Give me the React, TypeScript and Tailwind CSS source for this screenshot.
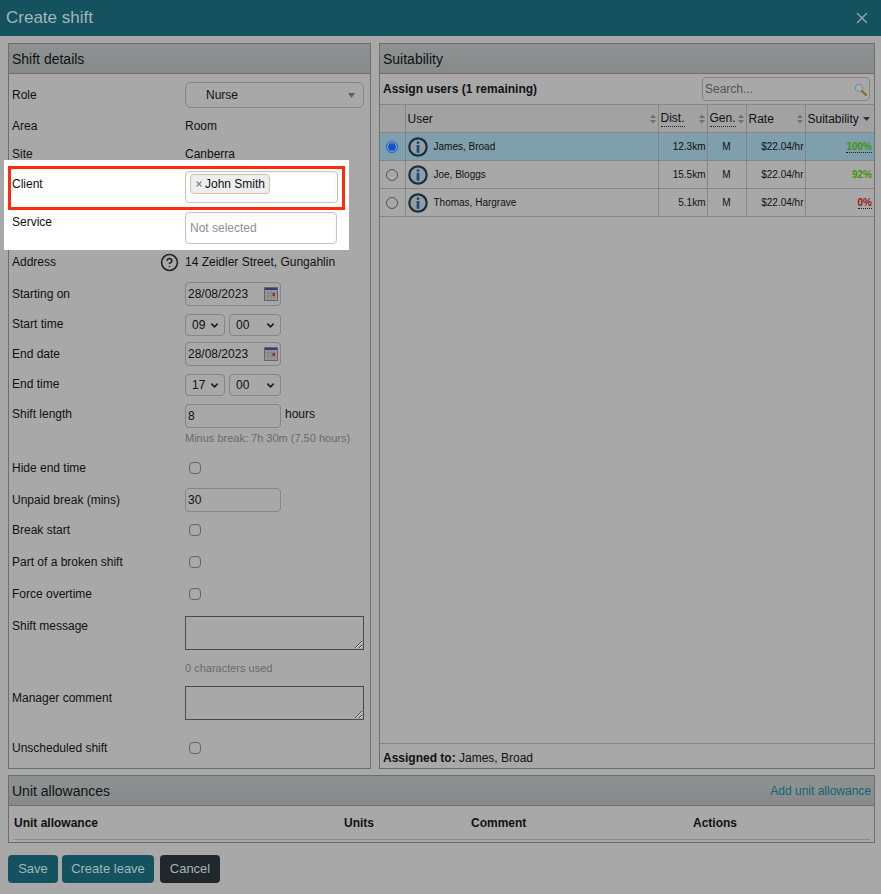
import { ChevronDown, CircleHelp, X } from 'lucide-react'

const USERS = [
  { name: 'James, Broad', dist: '12.3km', pct: '100%', color: 'text-[#3f9408]', dotted: true, selected: true },
  { name: 'Joe, Bloggs', dist: '15.5km', pct: '92%', color: 'text-[#3f9408]', dotted: false, selected: false },
  { name: 'Thomas, Hargrave', dist: '5.1km', pct: '0%', color: 'text-[#9c1414]', dotted: true, selected: false },
]

function CalendarIcon() {
  return (
    <svg width="14" height="14" viewBox="0 0 14 14" className="absolute right-0.5 top-1">
      <rect x="0.5" y="0.5" width="13" height="13" fill="#9a9a9a" stroke="#666" />
      <rect x="1" y="1" width="12" height="2" fill="#2f3f80" />
      <path d="M1 6h12M1 9h12M4 3v10M7 3v10M10 3v10" stroke="#7c7c7c" strokeWidth="0.7" />
      <rect x="8.5" y="6" width="2.5" height="3" fill="#8c3030" />
    </svg>
  )
}

function InfoIcon() {
  return (
    <svg width="20" height="20" viewBox="0 0 20 20" className="shrink-0">
      <circle cx="10" cy="10" r="8.7" fill="#929ea4" stroke="#1a2f3d" strokeWidth="2.2" />
      <circle cx="10" cy="5.7" r="1.4" fill="#1f4a80" />
      <rect x="8.6" y="8" width="2.8" height="7.8" rx="0.4" fill="#1f4a80" />
    </svg>
  )
}

function SortArrows() {
  return (
    <svg width="6" height="10" viewBox="0 0 6 10" className="shrink-0">
      <path d="M3 0.5 6 4H0zM3 9.5 0 6h6z" fill="#6f6f6f" />
    </svg>
  )
}

function PanelHeader({ children }: { children: React.ReactNode }) {
  return (
    <div className="flex h-7.5 items-center justify-between border-b border-[#6e6e6e] bg-gradient-to-b from-[#8f9292] to-[#868a8a] px-[3px] text-sm text-[#111]">
      {children}
    </div>
  )
}

function Label({ children }: { children: React.ReactNode }) {
  return <div className="w-[173px] shrink-0 leading-5">{children}</div>
}

function DateInput({ value }: { value: string }) {
  return (
    <div className="relative flex h-6 w-24 items-center rounded-sm border border-[#858585] pl-0.5">
      {value}
      <CalendarIcon />
    </div>
  )
}

function TimeSelect({ value, width }: { value: string; width: string }) {
  return (
    <div className={`flex h-5.5 items-center justify-between rounded-sm border border-[#858585] pl-1.5 pr-1 ${width}`}>
      {value}
      <ChevronDown size={11} strokeWidth={3.5} className="text-[#222]" />
    </div>
  )
}

function Check() {
  return <input type="checkbox" className="ml-1 mt-1 h-3 w-3 appearance-none rounded-sm border border-[#666]" />
}

function Textarea() {
  return <textarea readOnly className="h-8.5 flex-1 border border-[#4a4a4a] bg-transparent" />
}

function HeaderCell({ label, dotted, width, sorted }: { label: string; dotted?: boolean; width?: string; sorted?: boolean }) {
  return (
    <th className={`border-l border-[#858585] bg-[#a2a2a2] px-0.5 font-normal ${width ?? ''}`}>
      <div className="flex items-center justify-between">
        <span className={dotted ? 'border-b border-dotted border-[#222] leading-4' : 'leading-4'}>{label}</span>
        {sorted ? (
          <svg width="7" height="4" viewBox="0 0 7 4" className="mr-0.5 shrink-0">
            <path d="M0 0h7L3.5 4z" fill="#333" />
          </svg>
        ) : (
          <SortArrows />
        )}
      </div>
    </th>
  )
}

export default function App() {
  return (
    <div className="min-h-screen bg-[#a8a8a8] font-['Liberation_Sans',Arial,sans-serif] text-xs text-[#111]">
      <div className="flex h-9 items-center justify-between bg-[#14525f] pl-1.5 pr-2.5 text-[17px] text-[#a3b6ba]">
        Create shift
        <X size={18} className="text-[#8aa3a9]" />
      </div>

      <div className="flex gap-2 pl-2 pr-1.5 pt-[7px]">
        {/* Shift details */}
        <div className="w-[363px] shrink-0 border border-[#6e6e6e]">
          <PanelHeader>Shift details</PanelHeader>
          <div className="pb-2.5 pl-[3px] pr-1.5 pt-2">
            <div className="flex items-center">
              <Label>Role</Label>
              <div className="flex h-6.5 flex-1 items-center justify-between rounded-md border border-[#858585] pl-5 pr-2">
                Nurse
                <svg width="7" height="5" viewBox="0 0 7 5">
                  <path d="M0 0h7L3.5 5z" fill="#5f5f5f" />
                </svg>
              </div>
            </div>
            <div className="mt-2 flex">
              <Label>Area</Label>
              <span className="leading-5">Room</span>
            </div>
            <div className="mt-2 flex h-4">
              <Label>Site</Label>
              <span className="leading-5">Canberra</span>
            </div>

            {/* highlighted fields */}
            <div className="-ml-2 w-[345px] bg-white pb-1.5 pl-1 pr-1 pt-1.5 text-[#111]">
              <div className="flex border-3 border-[#ff2a0a] pb-1 pl-px pr-1 pt-0.5">
                <div className="mt-0.5 w-[173px] shrink-0 pt-px leading-5">Client</div>
                <div className="flex h-8 flex-1 rounded-sm border border-[#c4c4c4] px-1 pt-0.5 shadow-inner">
                  <span className="flex h-5 items-center gap-0.5 rounded-sm border border-[#c9c9a8] bg-[#eeeeee] px-1">
                    <X size={8} strokeWidth={4} className="text-[#8a8a8a]" />
                    John Smith
                  </span>
                </div>
              </div>
              <div className="mt-0.5 flex pl-1 pr-2">
                <div className="w-[173px] shrink-0 leading-5">Service</div>
                <div className="flex h-8 flex-1 items-center rounded-sm border border-[#c4c4c4] px-1 text-[#8f8f8f] shadow-inner">
                  Not selected
                </div>
              </div>
            </div>

            <div className="mt-0.5 flex">
              <div className="flex w-[173px] shrink-0 items-center justify-between pr-1.5 leading-5">
                Address
                <CircleHelp size={19} className="text-[#222]" />
              </div>
              <span className="leading-5">14 Zeidler Street, Gungahlin</span>
            </div>

            <div className="mt-2.5 flex items-center">
              <Label>Starting on</Label>
              <DateInput value="28/08/2023" />
            </div>
            <div className="mt-2 flex">
              <Label>Start time</Label>
              <div className="flex gap-1">
                <TimeSelect value="09" width="w-10" />
                <TimeSelect value="00" width="w-13" />
              </div>
            </div>
            <div className="mt-1.5 flex items-center">
              <Label>End date</Label>
              <DateInput value="28/08/2023" />
            </div>
            <div className="mt-2 flex">
              <Label>End time</Label>
              <div className="flex gap-1">
                <TimeSelect value="17" width="w-10" />
                <TimeSelect value="00" width="w-13" />
              </div>
            </div>
            <div className="mt-2 flex">
              <Label>Shift length</Label>
              <div className="flex h-6 w-24 items-center rounded-sm border border-[#858585] pl-0.5">8</div>
              <span className="ml-1 leading-5">hours</span>
            </div>
            <div className="ml-[173px] mt-0.5 text-[11px] leading-4 text-[#6a6a6a]">Minus break: 7h 30m (7.50 hours)</div>

            <div className="mt-3 flex">
              <Label>Hide end time</Label>
              <Check />
            </div>
            <div className="mt-2.5 flex items-center">
              <Label>Unpaid break (mins)</Label>
              <div className="flex h-6 w-24 items-center rounded-sm border border-[#858585] pl-0.5">30</div>
            </div>
            <div className="mt-2 flex">
              <Label>Break start</Label>
              <Check />
            </div>
            <div className="mt-3 flex">
              <Label>Part of a broken shift</Label>
              <Check />
            </div>
            <div className="mt-3 flex">
              <Label>Force overtime</Label>
              <Check />
            </div>
            <div className="mt-3 flex">
              <Label>Shift message</Label>
              <Textarea />
            </div>
            <div className="ml-[173px] mt-2.5 text-[11px] leading-4 text-[#6a6a6a]">0 characters used</div>
            <div className="mt-2.5 flex">
              <div className="mt-0.5 w-[173px] shrink-0 leading-5">Manager comment</div>
              <Textarea />
            </div>
            <div className="mt-4.5 flex">
              <Label>Unscheduled shift</Label>
              <Check />
            </div>
          </div>
        </div>

        {/* Suitability */}
        <div className="flex flex-1 flex-col border border-[#6e6e6e]">
          <PanelHeader>Suitability</PanelHeader>
          <div className="flex h-7.5 items-center justify-between pl-[3px] pr-1">
            <span className="font-bold">Assign users (1 remaining)</span>
            <div className="flex h-6 w-42 items-center justify-between rounded-sm border border-[#858585] pl-0.5 pr-0.5 text-[#555]">
              Search...
              <svg width="13" height="13" viewBox="0 0 13 13">
                <circle cx="5" cy="5" r="3.8" fill="#9fb0b6" stroke="#7c8c90" />
                <path d="M8 8l4 4" stroke="#8d6420" strokeWidth="2" strokeLinecap="round" />
              </svg>
            </div>
          </div>
          <div className="flex-1">
            <table className="w-full table-fixed border-collapse border-y border-[#858585]">
              <thead>
                <tr className="h-7 text-left">
                  <th className="w-[25px] bg-[#a2a2a2]" />
                  <HeaderCell label="User" />
                  <HeaderCell label="Dist." dotted width="w-[49px]" />
                  <HeaderCell label="Gen." dotted width="w-[39px]" />
                  <HeaderCell label="Rate" width="w-[59px]" />
                  <HeaderCell label="Suitability" sorted width="w-[69px]" />
                </tr>
              </thead>
              <tbody className="text-[10px]">
                {USERS.map(u => (
                  <tr key={u.name} className={`h-7 border-t border-[#858585] ${u.selected ? 'bg-[#7f9fac]' : ''}`}>
                    <td className="text-center">
                      <input
                        type="radio"
                        readOnly
                        checked={u.selected}
                        className="mt-1 h-3 w-3 appearance-none rounded-full border border-[#555] checked:border-[#2a66d0] checked:bg-[#1655c4] checked:shadow-[inset_0_0_0_1px_#a9b8c4]"
                      />
                    </td>
                    <td className="border-l border-[#858585] pl-0.5">
                      <div className="flex items-center gap-1.5">
                        <InfoIcon />
                        {u.name}
                      </div>
                    </td>
                    <td className="border-l border-[#858585] pr-px text-right">{u.dist}</td>
                    <td className="border-l border-[#858585] text-center">M</td>
                    <td className="border-l border-[#858585] pr-px text-right">$22.04/hr</td>
                    <td className={`border-l border-[#858585] pr-0.5 text-right font-bold ${u.color}`}>
                      <span className={u.dotted ? 'border-b border-dotted border-[#222]' : ''}>{u.pct}</span>
                    </td>
                  </tr>
                ))}
              </tbody>
            </table>
          </div>
          <div className="border-t border-[#858585] px-[3px] pb-0.5 pt-1.5 leading-4">
            <b>Assigned to:</b> James, Broad
          </div>
        </div>
      </div>

      {/* Unit allowances */}
      <div className="ml-2 mr-1.5 mt-1.5 border border-[#6e6e6e]">
        <PanelHeader>
          Unit allowances
          <a className="text-xs text-[#0f6677]">Add unit allowance</a>
        </PanelHeader>
        <div className="mx-1 flex h-8.5 items-center border-b border-[#8a8a8a] pl-px font-bold">
          <span className="w-[330px]">Unit allowance</span>
          <span className="w-[127px]">Units</span>
          <span className="w-[222px]">Comment</span>
          <span>Actions</span>
        </div>
        <div className="h-0.5" />
      </div>

      <div className="flex gap-1 pl-2 pt-3 text-[13px] text-[#a3b6ba]">
        <button className="h-7 w-12.5 rounded-sm bg-[#14525f]">Save</button>
        <button className="h-7 w-23 rounded-sm bg-[#14525f]">Create leave</button>
        <button className="ml-0.5 h-7 w-15 rounded-sm bg-[#20282b]">Cancel</button>
      </div>
    </div>
  )
}
